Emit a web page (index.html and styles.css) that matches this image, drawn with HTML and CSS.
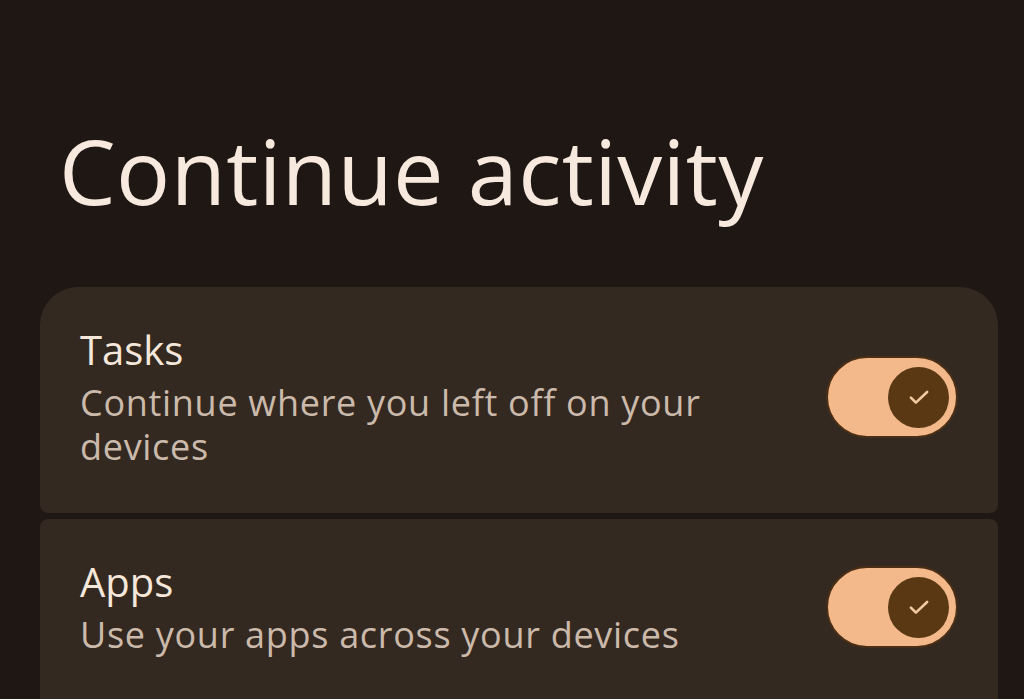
FILE: index.html
```html
<!DOCTYPE html>
<html lang="en">
<head>
<meta charset="utf-8">
<title>Continue activity</title>
<link rel="stylesheet" href="styles.css">
</head>
<body>
<main class="page">
  <h1 class="title">Continue activity</h1>
  <section class="list">
    <div class="card card-first">
      <div class="card-text">
        <div class="card-title">Tasks</div>
        <div class="card-sub">Continue where you left off on your devices</div>
      </div>
      <div class="switch" role="switch" aria-checked="true">
        <span class="thumb">
          <svg viewBox="0 0 24 24" width="30" height="30"><path d="M5.5 12.5l4 4L18.5 8" fill="none" stroke="#f3c9a0" stroke-width="2.1" stroke-linecap="round" stroke-linejoin="round"/></svg>
        </span>
      </div>
    </div>
    <div class="card card-last">
      <div class="card-text">
        <div class="card-title">Apps</div>
        <div class="card-sub">Use your apps across your devices</div>
      </div>
      <div class="switch" role="switch" aria-checked="true">
        <span class="thumb">
          <svg viewBox="0 0 24 24" width="30" height="30"><path d="M5.5 12.5l4 4L18.5 8" fill="none" stroke="#f3c9a0" stroke-width="2.1" stroke-linecap="round" stroke-linejoin="round"/></svg>
        </span>
      </div>
    </div>
  </section>
</main>
</body>
</html>
```
FILE: styles.css
```css
html, body {
  margin: 0;
  padding: 0;
  background: #1f1714;
  height: 100%;
  overflow: hidden;
}
body {
  font-family: "Open Sans", sans-serif;
  color: #f6e7db;
}
.page {
  padding: 0 26px 0 40px;
}
.title {
  margin: 0;
  padding: 120px 0 0 19px;
  font-size: 90px;
  font-weight: 400;
  line-height: 100px;
  letter-spacing: 0.4px;
  color: #f7e9dd;
}
.list {
  margin-top: 67px;
  display: flex;
  flex-direction: column;
  gap: 6px;
}
.card {
  background: #332920;
  display: flex;
  align-items: center;
  justify-content: space-between;
  padding: 38px 40px 44px;
  box-sizing: border-box;
}
.card-first {
  border-radius: 38px 38px 8px 8px;
}
.card-last {
  border-radius: 8px 8px 38px 38px;
  padding-bottom: 44px;
  margin-bottom: -60px;
  border-bottom: 60px solid #332920;
}
.card-text {
  max-width: 660px;
}
.card-title {
  font-size: 40px;
  line-height: 50px;
  color: #f6e7db;
}
.card-sub {
  margin-top: 6px;
  font-size: 36px;
  line-height: 44px;
  letter-spacing: 0.7px;
  color: #cbbaab;
}
.switch {
  width: 132px;
  height: 82px;
  border-radius: 41px;
  background: #f3b98b;
  border: 2px solid #4a2f16;
  display: flex;
  align-items: center;
  justify-content: flex-end;
  padding: 0 7px;
  box-sizing: border-box;
  flex-shrink: 0;
}
.thumb {
  width: 61px;
  height: 61px;
  border-radius: 50%;
  background: #5a3814;
  display: flex;
  align-items: center;
  justify-content: center;
}
```
